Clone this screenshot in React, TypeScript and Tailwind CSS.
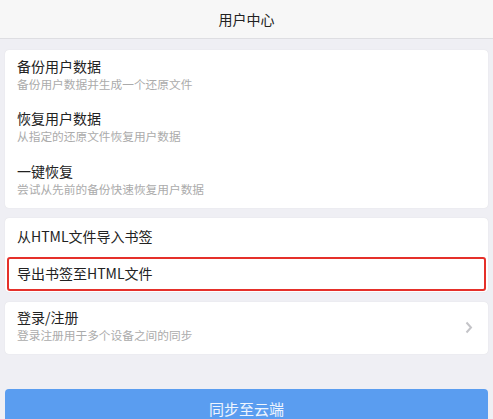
import React from 'react';

interface Item {
  title: string;
  desc?: string;
}

const dataItems: Item[] = [
  { title: '备份用户数据', desc: '备份用户数据并生成一个还原文件' },
  { title: '恢复用户数据', desc: '从指定的还原文件恢复用户数据' },
  { title: '一键恢复', desc: '尝试从先前的备份快速恢复用户数据' },
];

function DetailRow({ title, desc }: Item) {
  return (
    <div className="h-[52.5px] pt-[7.5px] px-3">
      <div className="text-[14px] leading-[17px] text-[#222]">{title}</div>
      <div className="text-[11.7px] leading-[17px] text-[#ababab]">{desc}</div>
    </div>
  );
}

export default function App() {
  return (
    <div
      className="w-[493px] h-[419px] overflow-hidden bg-[#efeff4] flex flex-col"
      style={{ fontFamily: '"Noto Sans CJK SC", "Liberation Sans", sans-serif' }}
    >
      {/* Header */}
      <div className="h-[39px] shrink-0 bg-[#f7f7f7] border-b border-[#dedee2] flex items-center justify-center">
        <span className="text-[14px] text-[#222]">用户中心</span>
      </div>

      <div className="flex flex-col gap-[10px] px-[5px] pt-[11px]">
        {/* Data backup */}
        <div className="bg-white rounded-[4px] shadow-[0_0_1px_rgba(0,0,0,0.12)]">
          {dataItems.map((item) => (
            <DetailRow key={item.title} {...item} />
          ))}
        </div>

        {/* Bookmarks */}
        <div className="bg-white rounded-[4px] shadow-[0_0_1px_rgba(0,0,0,0.12)]">
          <div className="h-[37px] px-3 flex items-center text-[14px] text-[#222]">
            从HTML文件导入书签
          </div>
          <div className="h-[37px] px-[2px] pt-[2px] pb-[1px]">
            <div className="h-full border-2 border-[#e5302a] rounded-[3px] px-[8px] flex items-center text-[14px] text-[#222]">
              导出书签至HTML文件
            </div>
          </div>
        </div>

        {/* Account */}
        <div className="bg-white rounded-[4px] shadow-[0_0_1px_rgba(0,0,0,0.12)] flex items-center pr-[15px]">
          <div className="flex-1">
            <DetailRow title="登录/注册" desc="登录注册用于多个设备之间的同步" />
          </div>
          <svg width="8" height="13" viewBox="0 0 8 13" fill="none">
            <path d="M1.5 1.5L6 6.5L1.5 11.5" stroke="#c4c4c8" strokeWidth="2" />
          </svg>
        </div>
      </div>

      {/* Sync button */}
      <div className="px-[5px] mt-[35px]">
        <button className="w-full h-[40px] bg-[#5a9df0] rounded-t-[4px] text-[15px] leading-[20px] text-white/90">
          同步至云端
        </button>
      </div>
    </div>
  );
}
